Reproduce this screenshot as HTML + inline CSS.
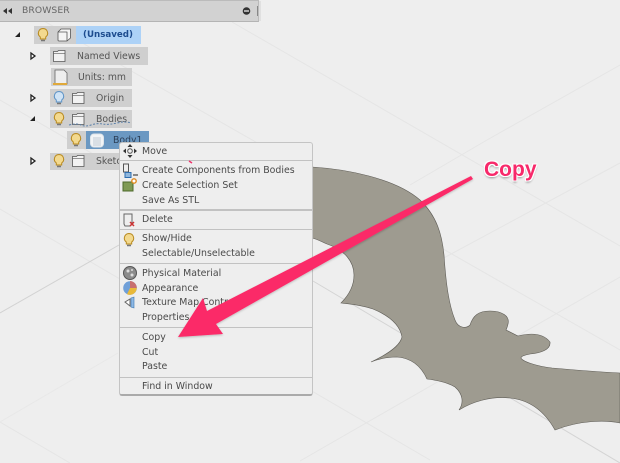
<!DOCTYPE html>
<html><head><meta charset="utf-8"><style>
html,body{margin:0;padding:0}
body{width:620px;height:463px;position:relative;overflow:hidden;background:#eeeeee;font-family:"DejaVu Sans","Liberation Sans",sans-serif;color:#555}
.a{position:absolute}
.t{position:absolute;font-size:9.3px;line-height:14px;white-space:nowrap;filter:blur(.3px)}
.r{position:absolute;background:#cfcfcf;height:17px}
.m{position:absolute;left:142px;font-size:9.4px;line-height:14px;white-space:nowrap;color:#4a4a4a;filter:blur(.3px)}
.s{position:absolute;left:120px;width:192px;height:1px;background:#c2c2c2}
svg{position:absolute;left:0;top:0}
</style></head><body>
<svg width="620" height="463" viewBox="0 0 620 463">
<g fill="none" stroke="#e5e5e5" stroke-width="1">
<path d="M0 100L150 187"/><path d="M232 22L620 246"/><path d="M7 0L620 350"/>
<path d="M0 209L430 460M0 422L70 463"/>
<path d="M313 281L620 463" stroke="#d4d4d4"/>
<path d="M0 422L118 353" stroke="#e8e8e8"/>
<path d="M440 260L620 163"/><path d="M300 461L620 277"/><path d="M410 185L487 140L620 65"/>
<path d="M0 313L119 245" stroke="#d2d2d2"/>
</g>
<path fill="#9e9b90" stroke="#5f5d57" stroke-width=".6" d="M312 167C345 169 395 178 420 200C437 216 442 235 444 255C446 285 449 305 455 320C458 328 466 329 470 325C473 316 478 311 490 311C502 311 510 316 508 324C507 328 506 330 506 330L518 336C530 333 543 333 550 342C551 350 540 353 530 354C525 355 521 356 521 358C522 361 535 366 552 368C575 370 600 372 620 373L620 423C606 420 580 420 555 430C545 412 530 400 510 398C490 396 472 402 459 410C464 403 463 394 455 387C447 382 435 380 427 379C421 366 411 358 397 357C388 357 378 359 371 362C388 354 400 346 402 337C400 325 390 316 373 309C362 305 350 304 341 303C350 294 354 284 354 275C354 262 345 250 327 244C322 242 317 239 312 238Z"/>
</svg>

<div class="a" style="left:0;top:0;width:259px;height:22px;background:#d2d2d2;border-bottom:1px solid #b4b4b4;border-right:1px solid #bbb;border-top:1px solid #bbb;box-sizing:border-box"></div>
<div class="a" style="left:259px;top:1px;width:2px;height:20px;background:#e0e0e0"></div>
<svg width="620" height="463"><path d="M3 11l4-3v6zM8 11l4-3v6z" fill="#333"/><circle cx="246.500" cy="11" r="3.800" fill="#333"/><rect x="244" y="10.300" width="5" height="1.400" fill="#ddd"/><path d="M257.500 6v10" stroke="#888"/></svg>
<div class="t" style="left:22px;top:4px;color:#666;font-size:9.2px;letter-spacing:.1px">BROWSER</div>

<div class="r" style="left:34px;top:26px;width:42px;height:18px"></div>
<div class="a" style="left:76px;top:26px;width:65px;height:18px;background:#add2f7"></div>
<div class="t" style="left:83px;top:28px;color:#1d4c8f;font-weight:bold;font-size:8.7px">(Unsaved)</div>
<div class="r" style="left:50px;top:47px;width:98px;height:18px"></div><div class="t" style="left:77px;top:50px">Named Views</div>
<div class="r" style="left:51px;top:68px;width:81px;height:18px"></div><div class="t" style="left:78px;top:71px">Units: mm</div>
<div class="r" style="left:50px;top:89px;width:82px;height:18px"></div><div class="t" style="left:96px;top:92px">Origin</div>
<div class="r" style="left:50px;top:110px;width:82px;height:18px"></div><div class="t" style="left:96px;top:113px">Bodies</div>
<div class="r" style="left:67px;top:131px;width:20px;height:18px"></div>
<div class="a" style="left:86px;top:131px;width:63px;height:18px;background:#6b98c2"></div><div class="t" style="left:113px;top:134px;color:#2c3e55">Body1</div>
<div class="r" style="left:50px;top:153px;width:70px;height:17px"></div><div class="t" style="left:96px;top:155px">Sketches</div>

<svg width="620" height="463">
<g fill="#222"><path d="M15 37l5-5v5zM30 121l5-5v5z"/></g>
<g fill="#fff" stroke="#222" stroke-width="1.300"><path d="M31 53l4 3-4 3zM31 95l4 3-4 3zM31 158l4 3-4 3z"/></g>
<defs><g id="b"><path d="M0 -5.500a4.700 4.700 0 0 1 2.700 8.500v2h-5.400v-2a4.700 4.700 0 0 1 2.700-8.500z" fill="#f3d98e" stroke="#b88a20"/><path d="M-2 6.500h4" stroke="#777" stroke-width="1.500"/></g>
<g id="bb"><path d="M0 -5.500a4.700 4.700 0 0 1 2.700 8.500v2h-5.400v-2a4.700 4.700 0 0 1 2.700-8.500z" fill="#cfe3f5" stroke="#5d93c6"/><path d="M-2 6.500h4" stroke="#777" stroke-width="1.500"/></g>
<g id="f"><path d="M.5 1.500h4l1-1h6.500v11h-11.500z" fill="#f2f2f2" stroke="#555" stroke-width=".8"/><path d="M.5 3.500h11.500" stroke="#555" stroke-width=".6"/></g></defs>
<use href="#b" x="43" y="34"/><use href="#f" x="53" y="50"/><use href="#f" x="72" y="92"/>
<use href="#bb" x="59" y="97"/><use href="#b" x="59" y="118"/><use href="#b" x="76" y="139"/><use href="#b" x="59" y="160"/>
<use href="#f" x="72" y="113"/><use href="#f" x="72" y="155"/>
<path d="M58 32h9v9h-8q-1 0-1-1zM58 32l3-3h9.500v9l-3.500 3v-9z" fill="#f4f4f4" stroke="#555" stroke-width=".8" stroke-linejoin="round"/>
<rect x="90.500" y="134" width="13" height="13" rx="3.500" fill="#f2f4f6" stroke="#dfe5ea"/><rect x="93" y="137" width="8" height="9" fill="#d9dfe5"/>
<path d="M55 70h9l3 3v11h-12z" fill="#eee" stroke="#666" stroke-width=".8"/><path d="M53 83h14v2h-14z" fill="#e0a93a"/>
<path d="M69 125q8 -2 12 0t10 0t12 -1t14 -1t14 0" fill="none" stroke="#5a7fa8" stroke-dasharray="2 1.500"/>
</svg>

<div class="a" style="left:119px;top:142px;width:194px;height:254px;background:#eeeeee;border:1px solid #c4c4c4;border-bottom:2px solid #aaa;border-radius:3px;box-sizing:border-box"></div>
<div class="s" style="top:160px"></div><div class="s" style="top:209px;height:2px"></div><div class="s" style="top:229px"></div><div class="s" style="top:263px"></div><div class="s" style="top:327px"></div><div class="s" style="top:377px"></div>
<div class="m" style="top:145px">Move</div>
<div class="m" style="top:164px">Create Components from Bodies</div>
<div class="m" style="top:179px">Create Selection Set</div>
<div class="m" style="top:194px">Save As STL</div>
<div class="m" style="top:213px">Delete</div>
<div class="m" style="top:232px">Show/Hide</div>
<div class="m" style="top:247px">Selectable/Unselectable</div>
<div class="m" style="top:267px">Physical Material</div>
<div class="m" style="top:282px">Appearance</div>
<div class="m" style="top:296px">Texture Map Controls</div>
<div class="m" style="top:311px">Properties</div>
<div class="m" style="top:331px">Copy</div>
<div class="m" style="top:346px">Cut</div>
<div class="m" style="top:360px">Paste</div>
<div class="m" style="top:380px">Find in Window</div>

<svg width="620" height="463">
<g fill="#333"><path d="M130 144l2.500 3h-5zM130 158l2.500-3h-5zM123 151l3-2.500v5zM137 151l-3-2.500v5z"/></g><circle cx="130" cy="151" r="2.300" fill="none" stroke="#555"/>
<rect x="123.500" y="164" width="5" height="8" fill="none" stroke="#555"/><rect x="125" y="172.500" width="6" height="5" fill="#8fb6dc" stroke="#2d6db0"/><path d="M133 175h5" stroke="#222"/>
<rect x="123" y="182" width="10" height="9" fill="#7f9a54" stroke="#4e6b2c"/><circle cx="134" cy="181" r="2.200" fill="#fff" stroke="#e08a1e" stroke-width="1.400"/>
<path d="M124 214h8v10l-2 2h-5l-1-2z" fill="#eee" stroke="#666"/><path d="M130 222l4 4m0-4l-4 4" stroke="#c33" stroke-width="1.500"/>
<use href="#b" x="129" y="239"/>
<circle cx="130" cy="273" r="6.500" fill="#8c8c8c" stroke="#555"/><circle cx="128" cy="271" r="1.500" fill="#ddd"/><circle cx="132" cy="275" r="1.500" fill="#ddd"/><circle cx="132" cy="270" r="1" fill="#ddd"/>
<circle cx="130" cy="288" r="6.800" fill="#6f9fd8"/><path d="M130 288V281A7 7 0 0 1 136.800 288z" fill="#c86f6f"/><path d="M130 288h6.800A7 7 0 0 1 127 294.300z" fill="#e9b93a"/>
<path d="M125 302l5-3v7z" fill="#fff" stroke="#666"/><path d="M131 298l3-1v11l-3-1z" fill="#8db8e4" stroke="#3b77b4" stroke-width=".6"/>
<path d="M189 161l3 2" stroke="#f0306a" stroke-width="1.500"/>
</svg>

<svg width="620" height="463"><defs><filter id="sh" x="-10%" y="-10%" width="120%" height="120%"><feDropShadow dx="0" dy="1" stdDeviation="1" flood-color="#000" flood-opacity=".22"/></filter></defs>
<path filter="url(#sh)" fill="#fb2b68" d="M471 176L473 179L216 324L223 334L178 337L203 298L207 311Z"/></svg>
<div class="a" style="left:484px;top:158px;font-family:'Liberation Sans',sans-serif;font-weight:bold;font-size:21px;line-height:24px;color:#f7296a;text-shadow:1px 0 0 #fff,-1px 0 0 #fff,0 1px 0 #fff,0 -1px 0 #fff,1px 1px 0 #fff,-1px -1px 0 #fff,1px -1px 0 #fff,-1px 1px 0 #fff,0 2px 2px rgba(0,0,0,.4)">Copy</div>
</body></html>
